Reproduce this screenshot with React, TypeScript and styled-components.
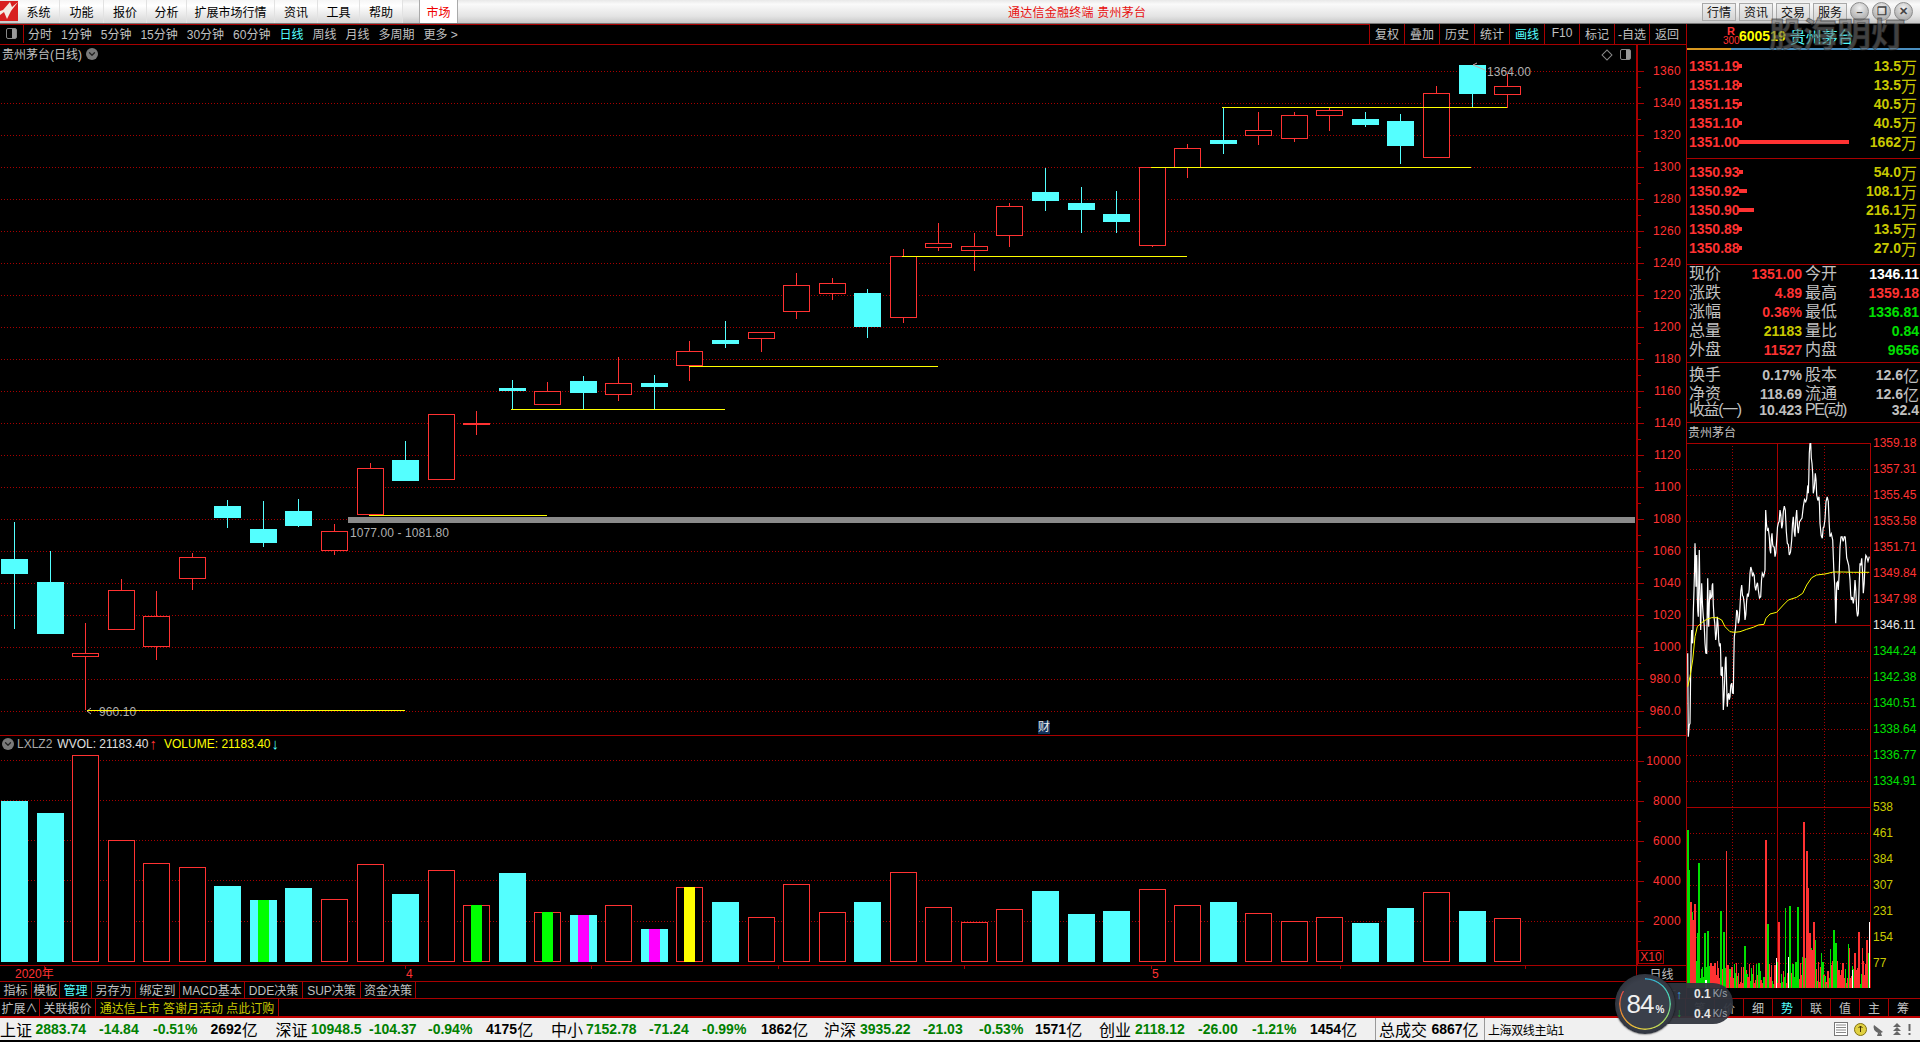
import React from "react";
import styled, { createGlobalStyle } from "styled-components";
import { ChevronDown } from "lucide-react";

const RED = "#ff3232";
const CYAN = "#54ffff";
const LINE = "#a80000";
const GRAY = "#c0c0c0";
const OLIVE = "#c8c800";
const FONT = `"Liberation Sans", "Noto Sans CJK SC", sans-serif`;

const GlobalStyle = createGlobalStyle`
  html, body {
    margin: 0;
    padding: 0;
    background: #000;
    overflow: hidden;
  }
  * { box-sizing: border-box; }
`;

const Screen = styled.div`
  position: relative;
  width: 1920px;
  height: 1042px;
  background: #000;
  overflow: hidden;
  font-family: ${FONT};
  font-size: 12px;
  color: ${GRAY};
  display: flex;
  flex-direction: column;
`;

// Title bar
const TitleBar = styled.div`
  height: 24px;
  display: flex;
  align-items: stretch;
  color: #000;
  background: linear-gradient(#e8e8e8, #fafafa 18%, #e4e4e4 70%, #c8c8c8);
  border-bottom: 1px solid #777;
`;

const Logo = styled.svg`
  width: 18px;
  height: 20px;
  margin-top: 1px;
`;

const MenuItem = styled.div<{ $w: number }>`
  width: ${(p) => p.$w}px;
  display: flex;
  align-items: center;
  justify-content: center;
  background: linear-gradient(#f6f6f6, #fff 25%, #d6d6d6);
  border-right: 1px solid #e2e2e2;
`;

const MarketTab = styled.div`
  width: 39px;
  margin-left: 16px;
  display: flex;
  align-items: center;
  justify-content: center;
  color: #f00000;
  background: #fff;
  border-left: 1px solid #aaa;
  border-right: 1px solid #aaa;
`;

const AppTitle = styled.div`
  margin-left: 550px;
  display: flex;
  align-items: center;
  color: #e81010;
  letter-spacing: 0.25px;
`;

const TitleRight = styled.div`
  margin-left: auto;
  display: flex;
  align-items: center;
  padding-right: 7px;
  gap: 3px;
`;

const TitleButton = styled.div`
  width: 34px;
  height: 18px;
  display: flex;
  align-items: center;
  justify-content: center;
  border: 1px solid #a8a8a8;
  background: linear-gradient(#f0f0f0, #d4d4d4);
  color: #111;
`;

const WinButton = styled.div`
  width: 19px;
  height: 19px;
  border-radius: 50%;
  display: flex;
  align-items: center;
  justify-content: center;
  border: 1px solid #8c8c8c;
  background: radial-gradient(circle at 50% 30%, #f2f2f2, #9a9a9a);
  color: #444;
  font-size: 11px;
  font-weight: 700;
`;

// Main body
const Body = styled.div`
  height: 974px;
  display: flex;
`;

const LeftColumn = styled.div`
  width: 1686px;
  display: flex;
  flex-direction: column;
`;

const Toolbar = styled.div`
  height: 21px;
  display: flex;
  padding-right: 2px;
  border-bottom: 1px solid ${LINE};
`;

const ToolbarLeft = styled.div`
  flex: 1;
  display: flex;
  align-items: center;
  gap: 9px;
  padding-bottom: 2px;
  border-top: 1px solid ${LINE};
`;

const PanelToggle = styled.div`
  width: 24px;
  height: calc(100% + 2px);
  margin-right: -5px;
  display: flex;
  align-items: center;
  justify-content: center;
  border-right: 1px solid ${LINE};
`;

const ToggleGlyph = styled.span`
  width: 11px;
  height: 11px;
  border: 1px solid #888;
  border-radius: 2px;
  background: linear-gradient(90deg, transparent 55%, #999 55%);
`;

const PeriodItem = styled.span<{ $active?: boolean }>`
  color: ${(p) => (p.$active ? CYAN : GRAY)};
  white-space: nowrap;
`;

const ToolCell = styled.div<{ $active?: boolean }>`
  width: 35px;
  display: flex;
  align-items: center;
  justify-content: center;
  padding-bottom: 2px;
  border-left: 1px solid ${LINE};
  color: ${(p) => (p.$active ? CYAN : GRAY)};
  white-space: nowrap;
`;

const MainPane = styled.div`
  position: relative;
  height: 690px;
  display: flex;
`;

const VolumePane = styled.div`
  position: relative;
  height: 230px;
  display: flex;
  border-top: 1px solid ${LINE};
`;

const ChartSvg = styled.svg`
  display: block;
  flex: 1;
  height: 100%;
`;

const SvgLabel = styled.text`
  font-family: ${FONT};
  font-size: 12px;
  letter-spacing: 0.1px;
  fill: #b0b0b0;
`;

const Axis = styled.div<{ $top: number }>`
  position: relative;
  width: 50px;
  padding-top: ${(p) => p.$top}px;
  border-left: 2px solid ${LINE};
`;

const AxisRow = styled.div<{ $h: number }>`
  position: relative;
  height: ${(p) => p.$h}px;
  line-height: ${(p) => p.$h}px;
  padding-right: 5px;
  text-align: right;
  letter-spacing: 0.3px;
  color: ${RED};
  &::before {
    content: "";
    position: absolute;
    left: 0;
    top: 50%;
    width: 6px;
    height: 1px;
    background: ${LINE};
  }
  &::after {
    content: "";
    position: absolute;
    left: 0;
    top: 100%;
    width: 3px;
    height: 1px;
    background: ${LINE};
  }
`;

const XBox = styled.div`
  position: absolute;
  left: 0;
  bottom: 1px;
  width: 26px;
  height: 14px;
  line-height: 12px;
  text-align: center;
  color: ${RED};
  border: 1px solid ${LINE};
`;

const PaneTitle = styled.div`
  position: absolute;
  left: 2px;
  top: 0;
  display: flex;
  align-items: center;
  gap: 4px;
  color: ${GRAY};
`;

const RoundIcon = styled.span`
  width: 12px;
  height: 12px;
  border-radius: 50%;
  display: inline-flex;
  align-items: center;
  justify-content: center;
  background: #7a7a7a;
  color: #222;
`;

const PaneCorner = styled.div`
  position: absolute;
  left: 1603px;
  top: 4px;
  display: flex;
  align-items: center;
  gap: 9px;
`;

const Diamond = styled.span`
  width: 8px;
  height: 8px;
  border: 1px solid #888;
  transform: rotate(45deg);
`;

const FinBadge = styled.div`
  position: absolute;
  left: 1038px;
  top: 676px;
  padding: 0;
  font-size: 12px;
  line-height: 13px;
  color: #e8e8e8;
  background: #12305a;
`;

const VolumeLegend = styled.div`
  position: absolute;
  left: 2px;
  top: 0;
  display: flex;
  align-items: center;
  gap: 3px;
  height: 15px;
`;

const LegendText = styled.span<{ $c: string; $gap?: number }>`
  color: ${(p) => p.$c};
  margin-left: ${(p) => p.$gap ?? 0}px;
  white-space: nowrap;
`;

const LegendArrow = styled.span<{ $c: string }>`
  color: ${(p) => p.$c};
  font-size: 15px;
  font-weight: 700;
  line-height: 15px;
  margin: 0 -2px;
`;

const DateRow = styled.div`
  position: relative;
  height: 16px;
  display: flex;
  border-top: 1px solid ${LINE};
`;

const DateAxis = styled.div`
  position: relative;
  width: 1636px;
`;

const DateLabel = styled.span<{ $x: number }>`
  position: absolute;
  left: ${(p) => p.$x}px;
  top: 1px;
  line-height: 15px;
  color: ${RED};
`;

const DateTick = styled.i<{ $x: number }>`
  position: absolute;
  left: ${(p) => p.$x}px;
  top: 0;
  width: 1px;
  height: 3px;
  background: ${LINE};
`;

const SideCell = styled.div`
  width: 50px;
  display: flex;
  align-items: center;
  justify-content: center;
  border-left: 1px solid ${LINE};
  color: ${GRAY};
`;

const TabRow = styled.div`
  height: 17px;
  display: flex;
  border-top: 1px solid ${LINE};
`;

const Tab = styled.div<{ $w: number; $c?: string }>`
  width: ${(p) => p.$w}px;
  display: flex;
  align-items: center;
  justify-content: center;
  padding-bottom: 1px;
  white-space: nowrap;
  color: ${(p) => p.$c ?? GRAY};
  border-right: 1px solid ${LINE};
`;

const SideTabs = styled.div`
  margin-left: auto;
  display: flex;
`;

const PlusMinus = styled.div`
  width: 25px;
  display: flex;
  align-items: center;
  justify-content: center;
  border-left: 1px solid ${LINE};
  color: ${GRAY};
`;

const BottomRow = styled.div`
  height: 18px;
  display: flex;
  padding-right: 3px;
  border-top: 1px solid ${LINE};
`;

const SideTab = styled.div<{ $active?: boolean }>`
  width: 29px;
  display: flex;
  align-items: center;
  justify-content: center;
  border-left: 1px solid ${LINE};
  color: ${(p) => (p.$active ? CYAN : GRAY)};
`;

// Right panel
const Panel = styled.div`
  width: 234px;
  display: flex;
  flex-direction: column;
  border-left: 1px solid ${LINE};
`;

const PanelHeader = styled.div`
  height: 26px;
  padding-left: 36px;
  display: flex;
  align-items: center;
  border-bottom: 2px solid #4a8fc0;
  position: relative;
  &::after {
    content: "";
    position: absolute;
    left: 0;
    bottom: -2px;
    width: 44px;
    height: 2px;
    background: #d89820;
  }
`;

const RBadge = styled.div`
  width: 16px;
  text-align: center;
  color: ${RED};
  font-size: 11px;
  font-weight: 700;
  line-height: 10px;
  small {
    display: block;
    font-size: 10px;
    font-weight: 400;
  }
`;

const StockCode = styled.span`
  color: #ffff00;
  font-weight: 700;
  font-size: 14px;
`;

const StockName = styled.span`
  margin-left: 4px;
  color: ${CYAN};
  font-size: 16px;
`;

const Watermark = styled.div`
  position: absolute;
  left: 1769px;
  top: 10px;
  font-size: 34px;
  line-height: 46px;
  font-weight: 700;
  letter-spacing: 0;
  white-space: nowrap;
  font-family: "Noto Sans CJK SC", sans-serif;
  color: rgba(110, 110, 110, 0.62);
  -webkit-text-stroke: 1px rgba(40, 40, 40, 0.5);
`;

const BookSection = styled.div<{ $top: number; $bottom: number }>`
  padding: ${(p) => p.$top}px 2px ${(p) => p.$bottom}px 2px;
  border-bottom: 1px solid ${LINE};
`;

const BookRow = styled.div`
  height: 19px;
  padding-right: 1px;
  display: flex;
  align-items: center;
`;

const BookPrice = styled.span`
  width: 50px;
  color: ${RED};
  font-weight: 700;
  font-size: 14px;
  letter-spacing: 0;
`;

const BookBar = styled.span`
  height: 4px;
  background: ${RED};
`;

const BookQty = styled.span`
  margin-left: auto;
  color: ${OLIVE};
  font-weight: 700;
  font-size: 14px;
  display: flex;
  align-items: center;
`;

const Unit = styled.span`
  font-weight: 400;
  font-size: 16px;
`;

const StatRow = styled.div`
  height: 19px;
  padding-bottom: 1px;
  display: grid;
  grid-template-columns: 113px 117px;
  align-items: center;
`;

const StatPair = styled.div<{ $second?: boolean }>`
  display: flex;
  align-items: center;
  justify-content: space-between;
  padding-left: ${(p) => (p.$second ? 3 : 0)}px;
`;

const StatLabel = styled.span<{ $tight?: boolean }>`
  font-size: 16px;
  line-height: 18px;
  letter-spacing: ${(p) => (p.$tight ? "-1.4px" : "0")};
  color: ${GRAY};
  white-space: nowrap;
`;

const StatValue = styled.span<{ $c: string }>`
  font-size: 14px;
  font-weight: 700;
  color: ${(p) => p.$c};
  display: flex;
  align-items: center;
`;

const NameRow = styled.div`
  height: 20px;
  line-height: 20px;
  padding-left: 1px;
`;

const MiniBody = styled.div`
  height: 545px;
  display: flex;
`;

const MiniSvg = styled.svg`
  display: block;
  width: 184px;
  height: 545px;
`;

const MiniAxis = styled.div`
  margin-top: -13px;
  padding-left: 2px;
`;

const MiniLabel = styled.div<{ $c: string }>`
  height: 26px;
  line-height: 26px;
  color: ${(p) => p.$c};
`;

// Status bar
const StatusBar = styled.div`
  height: 24px;
  display: flex;
  align-items: center;
  background: #f0f0f0;
  border-top: 2px solid #c00000;
  color: #000;
  white-space: nowrap;
`;

const StatusCell = styled.span<{ $w: number; $c?: string; $thin?: boolean }>`
  width: ${(p) => p.$w}px;
  flex: none;
  display: flex;
  align-items: center;
  color: ${(p) => p.$c ?? "#000"};
  font-size: ${(p) => (p.$thin ? 16 : 14)}px;
  font-weight: ${(p) => (p.$thin ? 400 : 700)};
`;

const StatusDivider = styled.div`
  width: 109px;
  height: 100%;
  flex: none;
  display: flex;
  align-items: center;
  padding-left: 3px;
  font-size: 16px;
  border-left: 1px solid #999;
`;

const Server = styled.div`
  height: 100%;
  display: flex;
  align-items: center;
  padding-left: 3px;
  letter-spacing: -0.4px;
  border-left: 1px solid #999;
`;

const TrayIcons = styled.div`
  margin-left: auto;
  display: flex;
  align-items: center;
  gap: 6px;
  padding-right: 9px;
`;

// Network widget floating over the lower right corner
const NetWidget = styled.div`
  position: absolute;
  left: 1615px;
  top: 974px;
  width: 120px;
  height: 60px;
`;

const NetPill = styled.div`
  position: absolute;
  left: 30px;
  top: 9px;
  width: 88px;
  height: 41px;
  border-radius: 20px;
  background: rgba(48, 52, 62, 0.94);
  padding-left: 49px;
  display: flex;
  flex-direction: column;
  justify-content: center;
  gap: 6px;
`;

const NetLine = styled.div`
  display: flex;
  align-items: center;
  gap: 2px;
  line-height: 14px;
  color: #e6e6e6;
  font-weight: 700;
  font-size: 12px;
  small {
    font-size: 10px;
    font-weight: 400;
    color: #9aa0aa;
  }
`;

const NetArrow = styled.span<{ $c: string; $top: number }>`
  position: absolute;
  left: 31px;
  top: ${(p) => p.$top}px;
  line-height: 14px;
  color: ${(p) => p.$c};
  font-size: 12px;
  font-weight: 700;
`;

const NetDial = styled.div`
  position: absolute;
  left: 0;
  top: 0;
  width: 60px;
  height: 60px;
  border-radius: 50%;
  display: flex;
  align-items: center;
  justify-content: center;
  background: radial-gradient(circle, #3a3f4a 55%, #20232a);
  box-shadow: 0 0 2px #000;
`;

const NetRing = styled.div`
  position: absolute;
  inset: 4px;
  border-radius: 50%;
  background: conic-gradient(#30a8d8 0deg, #50d8b0 80deg, #a8d860 130deg, #e8d040 190deg, #e88a30 250deg, #e04848 302deg, transparent 302deg);
  -webkit-mask: radial-gradient(circle, transparent 24px, #000 25px);
  mask: radial-gradient(circle, transparent 24px, #000 25px);
`;

const NetValue = styled.div`
  display: flex;
  align-items: baseline;
  color: #f0f0f0;
  font-size: 26px;
  letter-spacing: -1px;
  small {
    margin-left: 2px;
    font-size: 10px;
    font-weight: 700;
  }
`;

type Candle = [number, number, number, number, "u" | "d"];

// wick top, body top, body bottom, wick bottom (page px)
const candles: Candle[] = [
  [522, 559, 574, 629, "d"], [551, 582, 634, 634, "d"], [623, 653, 657, 710, "u"], [579, 590, 630, 630, "u"],
  [591, 616, 647, 660, "u"], [553, 557, 579, 590, "u"], [500, 506, 518, 528, "d"], [501, 529, 543, 547, "d"],
  [499, 511, 526, 527, "d"], [524, 531, 551, 555, "u"], [463, 468, 515, 515, "u"], [441, 460, 481, 481, "d"],
  [414, 414, 480, 480, "u"], [411, 423, 425, 435, "u"], [380, 388, 391, 409, "d"], [382, 391, 405, 405, "u"],
  [376, 381, 393, 409, "d"], [357, 383, 395, 401, "u"], [375, 383, 387, 409, "d"], [341, 351, 366, 381, "u"],
  [321, 340, 344, 348, "d"], [332, 332, 339, 352, "u"], [273, 285, 312, 319, "u"], [278, 283, 294, 300, "u"],
  [289, 293, 327, 338, "d"], [249, 256, 318, 323, "u"], [223, 243, 248, 251, "u"], [233, 246, 251, 271, "u"],
  [203, 206, 236, 247, "u"], [168, 192, 201, 211, "d"], [187, 203, 210, 233, "d"], [191, 214, 222, 233, "d"],
  [167, 167, 246, 247, "u"], [144, 148, 168, 178, "u"], [107, 140, 144, 154, "d"], [112, 130, 136, 145, "u"],
  [112, 115, 139, 142, "u"], [107, 110, 116, 131, "u"], [112, 119, 125, 127, "d"], [114, 121, 146, 164, "d"],
  [86, 93, 158, 158, "u"], [65, 65, 94, 107, "d"], [74, 86, 95, 108, "u"],
];

// bar top in zoom units (y = 730 + v / 3), "u" hollow red, "d" solid cyan, optional centre colour
const volumes: [number, "u" | "d", string?][] = [
  [213, "d"], [249, "d"], [76, "u"], [331, "u"], [400, "u"], [412, "u"], [468, "d"], [510, "d", "#00ff00"],
  [474, "d"], [508, "u"], [403, "u"], [492, "d"], [421, "u"], [526, "u", "#00ff00"], [429, "d"], [547, "u", "#00ff00"],
  [555, "d", "#ff00ff"], [526, "u"], [597, "d", "#ff00ff"], [472, "u", "#ffff00"], [516, "d"], [562, "u"], [463, "u"],
  [547, "u"], [516, "d"], [427, "u"], [532, "u"], [577, "u"], [538, "u"], [483, "d"], [552, "d"], [543, "d"],
  [478, "u"], [526, "u"], [516, "d"], [550, "u"], [574, "u"], [562, "u"], [579, "d"], [534, "d"], [487, "u"],
  [543, "d"], [565, "u"],
];

const supportLines = [
  [1221, 1506, 107], [1150, 1470, 167], [901, 1186, 256], [688, 937, 366], [510, 724, 409], [368, 546, 515], [86, 404, 710],
];

const barLeft = (i: number) => Math.round(35.55 * i);

const priceRaw = "143,670 145,920 150,880 152,720 155,600 158,640 162,480 165,340 168,470 170,375 172,500 175,560 178,360 182,600 185,460 190,560 195,640 200,670 203,445 206,590 210,480 215,500 218,460 222,560 227,630 232,560 236,630 241,640 243,735 247,710 250,840 255,720 258,680 262,830 266,790 270,800 275,760 280,790 283,620 290,540 295,580 300,530 305,465 310,500 315,570 320,510 325,500 330,430 335,420 340,430 345,470 350,465 355,480 362,500 367,430 375,420 377,240 382,300 388,320 392,370 396,310 400,350 405,380 410,330 415,280 420,240 425,295 430,245 436,240 442,340 448,375 455,330 460,260 465,320 470,240 475,310 482,270 490,230 497,215 503,170 505,190 508,70 512,40 516,100 520,190 526,130 530,195 537,200 540,280 547,325 552,290 558,215 565,215 570,320 578,330 585,480 587,580 590,460 595,480 600,350 606,320 613,320 618,350 622,390 630,450 634,510 640,520 645,450 650,540 655,550 660,400 665,385 670,490 675,400 680,380 688,380";
const avgRaw = "143,770 150,740 158,690 165,620 172,590 185,578 200,568 215,563 232,563 245,570 255,590 270,605 285,607 300,605 320,598 340,592 355,585 372,583 378,565 390,552 410,547 430,525 445,510 470,502 488,490 500,465 515,443 530,435 555,432 580,426 610,426 640,427 688,427";

const parsePairs = (raw: string) => raw.split(" ").map((pair) => pair.split(",").map(Number));

const toPage = (pts: number[][]) =>
  pts.map(([x, y]) => `${(1640 + x / 3).toFixed(1)},${(430 + y / 3).toFixed(1)}`).join(" ");

// zigzag between the hand read points so the minute line looks as busy as it does on screen
const busyLine = (pts: number[][]) =>
  pts.flatMap(([x, y], i) => {
    const next = pts[i + 1];
    if (!next) return [[x, y]];
    const swing = i % 2 === 0 ? 14 : -14;
    return [[x, y], [(x + next[0]) / 2, (y + next[1]) / 2 + swing]];
  });

// minute volume spikes: zoom x, zoom top, colour
const volSpikes: [number, number, string][] = [
  [262, 270, "g"], [265, 390, "g"], [271, 485, "r"], [276, 515, "g"], [283, 492, "r"], [290, 580, "g"], [295, 370, "g"],
  [277, 540, "r"], [313, 580, "g"], [322, 573, "g"], [361, 513, "g"], [370, 577, "g"], [377, 333, "r"], [433, 618, "g"],
  [496, 300, "r"], [502, 553, "g"], [535, 545, "r"], [555, 505, "g"], [568, 498, "g"], [592, 502, "g"], [610, 245, "r"],
  [619, 333, "r"], [622, 445, "r"], [628, 580, "r"], [640, 545, "r"], [644, 600, "g"], [663, 640, "g"], [690, 628, "g"],
  [700, 570, "g"], [706, 610, "g"], [743, 612, "g"], [747, 625, "r"], [763, 640, "r"], [775, 575, "r"], [785, 625, "r"],
  [799, 600, "r"], [803, 640, "g"], [528, 655, "w"], [563, 650, "w"], [755, 690, "w"], [806, 545, "w"], [316, 720, "w"],
];

const miniVolumes = (() => {
  const out: [number, number, string][] = [];
  let seed = 7;
  for (let x = 260; x < 804; x += 3.2) {
    seed = (seed * 73 + 41) % 1009;
    const nearPeak = x > 605 && x < 640;
    const h = nearPeak ? 90 + (seed % 50) : 12 + (seed % 70);
    const c = seed % 5 < 2 ? "g" : "r";
    out.push([x, 745 - h, x < 330 ? "g" : c]);
  }
  return [...out, ...volSpikes];
})();

const volColor: Record<string, string> = { g: "#00e000", r: RED, w: "#ffffff" };

const miniLabels: [string, string][] = [
  ["1359.18", RED], ["1357.31", RED], ["1355.45", RED], ["1353.58", RED], ["1351.71", RED], ["1349.84", RED], ["1347.98", RED],
  ["1346.11", "#e8e8e8"], ["1344.24", "#00e000"], ["1342.38", "#00e000"], ["1340.51", "#00e000"], ["1338.64", "#00e000"],
  ["1336.77", "#00e000"], ["1334.91", "#00e000"], ["538", OLIVE], ["461", OLIVE], ["384", OLIVE], ["307", OLIVE],
  ["231", OLIVE], ["154", OLIVE], ["77", OLIVE],
];

const sell = [
  ["1351.19", 3, "13.5"], ["1351.18", 3, "13.5"], ["1351.15", 3, "40.5"], ["1351.10", 3, "40.5"], ["1351.00", 110, "1662"],
] as const;
const buy = [
  ["1350.93", 4, "54.0"], ["1350.92", 8, "108.1"], ["1350.90", 15, "216.1"], ["1350.89", 3, "13.5"], ["1350.88", 3, "27.0"],
] as const;

const stats: [string, string, string, string, string, string][] = [
  ["现价", "1351.00", RED, "今开", "1346.11", "#ffffff"],
  ["涨跌", "4.89", RED, "最高", "1359.18", RED],
  ["涨幅", "0.36%", RED, "最低", "1336.81", "#00e000"],
  ["总量", "21183", OLIVE, "量比", "0.84", "#00e000"],
  ["外盘", "11527", RED, "内盘", "9656", "#00e000"],
];
const stats2: [string, string, string, string][] = [
  ["换手", "0.17%", "股本", "12.6"],
  ["净资", "118.69", "流通", "12.6"],
  ["收益(一)", "10.423", "PE(动)", "32.4"],
];

const indexes = [
  { name: "上证", w: [35.5, 63.5, 54, 57.5, 65], vals: ["2883.74", "-14.84", "-0.51%", "2692"] },
  { name: "深证", w: [35.5, 58, 59, 58, 65], vals: ["10948.5", "-104.37", "-0.94%", "4175"] },
  { name: "中小", w: [35, 63, 53, 59, 63], vals: ["7152.78", "-71.24", "-0.99%", "1862"] },
  { name: "沪深", w: [36, 63, 56, 56, 64], vals: ["3935.22", "-21.03", "-0.53%", "1571"] },
  { name: "创业", w: [36, 63, 54, 58, 65], vals: ["2118.12", "-26.00", "-1.21%", "1454"] },
];

const periods = ["分时", "1分钟", "5分钟", "15分钟", "30分钟", "60分钟", "日线", "周线", "月线", "多周期", "更多 >"];
const tools = ["复权", "叠加", "历史", "统计", "画线", "F10", "标记", "-自选", "返回"];
const menus: [string, number][] = [["系统", 42], ["功能", 44], ["报价", 43], ["分析", 40], ["扩展市场行情", 88], ["资讯", 43], ["工具", 42], ["帮助", 43]];
const tabsA: [string, number, string?][] = [
  ["指标", 32], ["模板", 28], ["管理", 32, CYAN], ["另存为", 44], ["绑定到", 44], ["MACD基本", 65], ["DDE决策", 58], ["SUP决策", 58], ["资金决策", 55],
];
const tabsB: [string, number, string?][] = [["扩展∧", 40], ["关联报价", 56], ["通达信上市 答谢月活动 点此订购", 183, OLIVE]];
const sideTabs = ["笔", "价", "细", "势", "联", "值", "主", "筹"];

const PriceChart = () => (
  <ChartSvg viewBox="0 0 1634 690">
    <g transform="translate(0,-45)" shapeRendering="crispEdges">
      {Array.from({ length: 21 }, (_, k) => (
        <line key={k} x1={0} x2={1634} y1={71.5 + 32 * k} y2={71.5 + 32 * k} stroke={LINE} strokeDasharray="1 2" />
      ))}
      {candles.map(([wt, bt, bb, wb, kind], i) => {
        const left = barLeft(i);
        const color = kind === "u" ? RED : CYAN;
        return (
          <g key={i}>
            <line x1={left + 13.5} x2={left + 13.5} y1={wt} y2={wb} stroke={color} />
            {kind === "u" ? (
              <rect x={left + 0.5} y={bt + 0.5} width={26} height={Math.max(bb - bt - 1, 1)} fill="#000" stroke={color} />
            ) : (
              <rect x={left} y={bt} width={27} height={bb - bt} fill={color} />
            )}
          </g>
        );
      })}
      <rect x={347} y={517} width={1287} height={6} fill="#8a8a8a" />
    </g>
    <g transform="translate(0,-45)">
      <SvgLabel x={349} y={537}>1077.00 - 1081.80</SvgLabel>
      <SvgLabel x={98} y={716}>960.10</SvgLabel>
      <SvgLabel x={1486} y={76}>1364.00</SvgLabel>
      <polyline points="90,708 86,711 90,714" fill="none" stroke="#b0b0b0" />
      <polyline points="1476,63 1472,65 1484,70" fill="none" stroke="#c8a8a8" />
      <g shapeRendering="crispEdges">
        {supportLines.map(([a, b, y]) => (
          <line key={y} x1={a} x2={b} y1={y + 0.5} y2={y + 0.5} stroke="#ffff00" />
        ))}
      </g>
    </g>
  </ChartSvg>
);

const VolumeChart = () => (
  <ChartSvg viewBox="0 0 1634 229">
    <g transform="translate(0,-736)" shapeRendering="crispEdges">
      {[760, 800, 840, 880, 921].map((y) => (
        <line key={y} x1={0} x2={1634} y1={y + 0.5} y2={y + 0.5} stroke={LINE} strokeDasharray="1 2" />
      ))}
      {volumes.map(([v, kind, mid], i) => {
        const left = barLeft(i);
        const top = Math.round(730 + v / 3);
        return (
          <g key={i}>
            {kind === "u" ? (
              <rect x={left + 0.5} y={top + 0.5} width={26} height={961 - top} fill="#000" stroke={RED} />
            ) : (
              <rect x={left} y={top} width={27} height={962 - top} fill={CYAN} />
            )}
            {mid && <rect x={left + 8} y={top} width={11} height={962 - top} fill={mid} />}
          </g>
        );
      })}
    </g>
  </ChartSvg>
);

const MiniChart = () => (
  <MiniSvg viewBox="0 0 184 545">
    <g transform="translate(-1687,-443)">
      <g shapeRendering="crispEdges">
        {Array.from({ length: 20 }, (_, k) => 469 + 26 * k)
          .filter((y) => y !== 625 && y !== 807)
          .map((y) => (
            <line key={y} x1={1687} x2={1870} y1={y + 0.5} y2={y + 0.5} stroke={LINE} strokeDasharray="1 2" />
          ))}
        <line x1={1732.5} x2={1732.5} y1={443} y2={988} stroke={LINE} strokeDasharray="1 2" />
        <line x1={1824.5} x2={1824.5} y1={443} y2={988} stroke={LINE} strokeDasharray="1 2" />
        <line x1={1777.5} x2={1777.5} y1={443} y2={988} stroke={LINE} />
        <line x1={1687} x2={1871} y1={443.5} y2={443.5} stroke={LINE} />
        <line x1={1687} x2={1871} y1={625.5} y2={625.5} stroke={LINE} />
        <line x1={1687} x2={1871} y1={807.5} y2={807.5} stroke={LINE} />
        <line x1={1687} x2={1871} y1={987.5} y2={987.5} stroke={LINE} />
        <line x1={1870.5} x2={1870.5} y1={443} y2={988} stroke={LINE} />
        {miniVolumes.map(([x, top, c], i) => (
          <rect key={i} x={1600 + x / 3} y={740 + top / 3} width={1.4} height={(745 - top) / 3} fill={volColor[c]} />
        ))}
      </g>
      <polyline points={toPage(busyLine(parsePairs(priceRaw)))} fill="none" stroke="#ffffff" strokeWidth={1.2} />
      <polyline points={toPage(parsePairs(avgRaw))} fill="none" stroke="#ffff00" strokeWidth={1} />
    </g>
  </MiniSvg>
);

const TrayGlyphs = () => (
  <>
    <svg width="14" height="14" viewBox="0 0 14 14">
      <rect x="0.5" y="0.5" width="13" height="13" fill="#fff" stroke="#777" />
      <path d="M2 3h10M2 5.5h10M2 8h10M2 10.5h10" stroke="#888" />
    </svg>
    <svg width="13" height="13" viewBox="0 0 13 13">
      <circle cx="6.5" cy="6.5" r="6" fill="#e0d040" stroke="#807010" />
      <path d="M6.5 3v6M4.5 5l2-2 2 2" stroke="#403000" fill="none" />
    </svg>
    <svg width="13" height="13" viewBox="0 0 13 13">
      <path d="M1 2l9 7a6 6 0 0 1-9-7zM5 10l-1 3h5l-1-3" fill="#666" />
    </svg>
    <svg width="10" height="13" viewBox="0 0 10 13">
      <path d="M5 0l4 4H1zM5 4l4 4H1zM5 8l4 4H1z" fill="#666" />
    </svg>
    <svg width="3" height="13" viewBox="0 0 3 13">
      <path d="M0.5 1h2v7h-2zM0.5 10h2v2h-2z" fill="#666" />
    </svg>
  </>
);

export default function App() {
  return (
    <Screen>
      <GlobalStyle />
      <TitleBar>
        <Logo viewBox="0 0 18 20">
          <rect width="18" height="20" fill="#d82020" />
          <path d="M10 1L3 9l-3 1v4l4-3 3 7 4-8 7-9-6 5z" fill="#f4ece4" />
        </Logo>
        {menus.map(([label, w]) => (
          <MenuItem key={label} $w={w}>{label}</MenuItem>
        ))}
        <MarketTab>市场</MarketTab>
        <AppTitle>通达信金融终端 贵州茅台</AppTitle>
        <TitleRight>
          {["行情", "资讯", "交易", "服务"].map((t) => (
            <TitleButton key={t}>{t}</TitleButton>
          ))}
          <WinButton>–</WinButton>
          <WinButton>❐</WinButton>
          <WinButton>✕</WinButton>
        </TitleRight>
      </TitleBar>

      <Body>
        <LeftColumn>
          <Toolbar>
            <ToolbarLeft>
              <PanelToggle><ToggleGlyph /></PanelToggle>
              {periods.map((p) => (
                <PeriodItem key={p} $active={p === "日线"}>{p}</PeriodItem>
              ))}
            </ToolbarLeft>
            {tools.map((t) => (
              <ToolCell key={t} $active={t === "画线"}>{t}</ToolCell>
            ))}
          </Toolbar>

          <MainPane>
            <PriceChart />
            <Axis $top={10}>
              {Array.from({ length: 21 }, (_, k) => {
                const v = 1360 - 20 * k;
                return <AxisRow key={v} $h={32}>{v < 1000 ? `${v}.0` : v}</AxisRow>;
              })}
            </Axis>
            <PaneTitle>
              贵州茅台(日线)
              <RoundIcon><ChevronDown size={10} strokeWidth={3} /></RoundIcon>
            </PaneTitle>
            <PaneCorner>
              <Diamond />
              <ToggleGlyph />
            </PaneCorner>
            <FinBadge>财</FinBadge>
          </MainPane>

          <VolumePane>
            <VolumeChart />
            <Axis $top={5}>
              {[10000, 8000, 6000, 4000, 2000].map((v) => (
                <AxisRow key={v} $h={40}>{v}</AxisRow>
              ))}
              <XBox>X10</XBox>
            </Axis>
            <VolumeLegend>
              <RoundIcon><ChevronDown size={10} strokeWidth={3} /></RoundIcon>
              <LegendText $c="#a8a8a8">LXLZ2</LegendText>
              <LegendText $c="#e0e0e0" $gap={2}>WVOL: 21183.40</LegendText>
              <LegendArrow $c={RED}>↑</LegendArrow>
              <LegendText $c="#ffff00" $gap={6}>VOLUME: 21183.40</LegendText>
              <LegendArrow $c={CYAN}>↓</LegendArrow>
            </VolumeLegend>
          </VolumePane>

          <DateRow>
            <DateAxis>
              <DateLabel $x={15}>2020年</DateLabel>
              <DateLabel $x={406}>4</DateLabel>
              <DateLabel $x={1152}>5</DateLabel>
              {[44, 405, 591, 778, 964, 1151, 1340, 1525].map((x) => (
                <DateTick key={x} $x={x} />
              ))}
            </DateAxis>
            <SideCell>日线</SideCell>
          </DateRow>

          <TabRow>
            {tabsA.map(([t, w, c]) => (
              <Tab key={t} $w={w} $c={c}>{t}</Tab>
            ))}
            <SideTabs>
              <PlusMinus>+</PlusMinus>
              <PlusMinus>-</PlusMinus>
            </SideTabs>
          </TabRow>
        </LeftColumn>

        <Panel>
          <PanelHeader>
            <RBadge>R<small>300</small></RBadge>
            <StockCode>600519</StockCode>
            <StockName>贵州茅台</StockName>
          </PanelHeader>
          <BookSection $top={6} $bottom={7}>
            {sell.map(([price, bar, qty]) => (
              <BookRow key={price}>
                <BookPrice>{price}</BookPrice>
                <BookBar style={{ width: bar }} />
                <BookQty>{qty}<Unit>万</Unit></BookQty>
              </BookRow>
            ))}
          </BookSection>
          <BookSection $top={3} $bottom={7}>
            {buy.map(([price, bar, qty]) => (
              <BookRow key={price}>
                <BookPrice>{price}</BookPrice>
                <BookBar style={{ width: bar }} />
                <BookQty>{qty}<Unit>万</Unit></BookQty>
              </BookRow>
            ))}
          </BookSection>
          <BookSection $top={0} $bottom={2}>
            {stats.map(([a, av, ac, b, bv, bc]) => (
              <StatRow key={a}>
                <StatPair><StatLabel>{a}</StatLabel><StatValue $c={ac}>{av}</StatValue></StatPair>
                <StatPair $second><StatLabel>{b}</StatLabel><StatValue $c={bc}>{bv}</StatValue></StatPair>
              </StatRow>
            ))}
          </BookSection>
          <BookSection $top={0} $bottom={2}>
            {stats2.map(([a, av, b, bv], i) => (
              <StatRow key={a}>
                <StatPair><StatLabel $tight={i === 2}>{a}</StatLabel><StatValue $c={GRAY}>{av}</StatValue></StatPair>
                <StatPair $second>
                  <StatLabel $tight={i === 2}>{b}</StatLabel>
                  <StatValue $c={GRAY}>{bv}{i < 2 && <Unit>亿</Unit>}</StatValue>
                </StatPair>
              </StatRow>
            ))}
          </BookSection>
          <NameRow>贵州茅台</NameRow>
          <MiniBody>
            <MiniChart />
            <MiniAxis>
              {miniLabels.map(([t, c]) => (
                <MiniLabel key={t} $c={c}>{t}</MiniLabel>
              ))}
            </MiniAxis>
          </MiniBody>
        </Panel>
      </Body>

      <BottomRow>
        {tabsB.map(([t, w, c]) => (
          <Tab key={t} $w={w} $c={c}>{t}</Tab>
        ))}
        <SideTabs>
          {sideTabs.map((t) => (
            <SideTab key={t} $active={t === "势"}>{t}</SideTab>
          ))}
        </SideTabs>
      </BottomRow>

      <StatusBar>
        {indexes.map((idx) => (
          <React.Fragment key={idx.name}>
            <StatusCell $w={idx.w[0]} $thin>{idx.name}</StatusCell>
            <StatusCell $w={idx.w[1]} $c="#008000">{idx.vals[0]}</StatusCell>
            <StatusCell $w={idx.w[2]} $c="#008000">{idx.vals[1]}</StatusCell>
            <StatusCell $w={idx.w[3]} $c="#008000">{idx.vals[2]}</StatusCell>
            <StatusCell $w={idx.w[4]}>{idx.vals[3]}<Unit>亿</Unit></StatusCell>
          </React.Fragment>
        ))}
        <StatusDivider>
          总成交&nbsp;
          <StatusCell $w={52}>6867<Unit>亿</Unit></StatusCell>
        </StatusDivider>
        <Server>上海双线主站1</Server>
        <TrayIcons><TrayGlyphs /></TrayIcons>
      </StatusBar>

      <Watermark>股海明灯</Watermark>

      <NetWidget>
        <NetPill>
          <NetArrow $c="#38a8e8" $top={5}>↑</NetArrow>
          <NetLine>0.1 <small>K/s</small></NetLine>
          <NetArrow $c="#20a030" $top={23}>↓</NetArrow>
          <NetLine>0.4 <small>K/s</small></NetLine>
        </NetPill>
        <NetDial>
          <NetRing />
          <NetValue>84<small>%</small></NetValue>
        </NetDial>
      </NetWidget>
    </Screen>
  );
}
